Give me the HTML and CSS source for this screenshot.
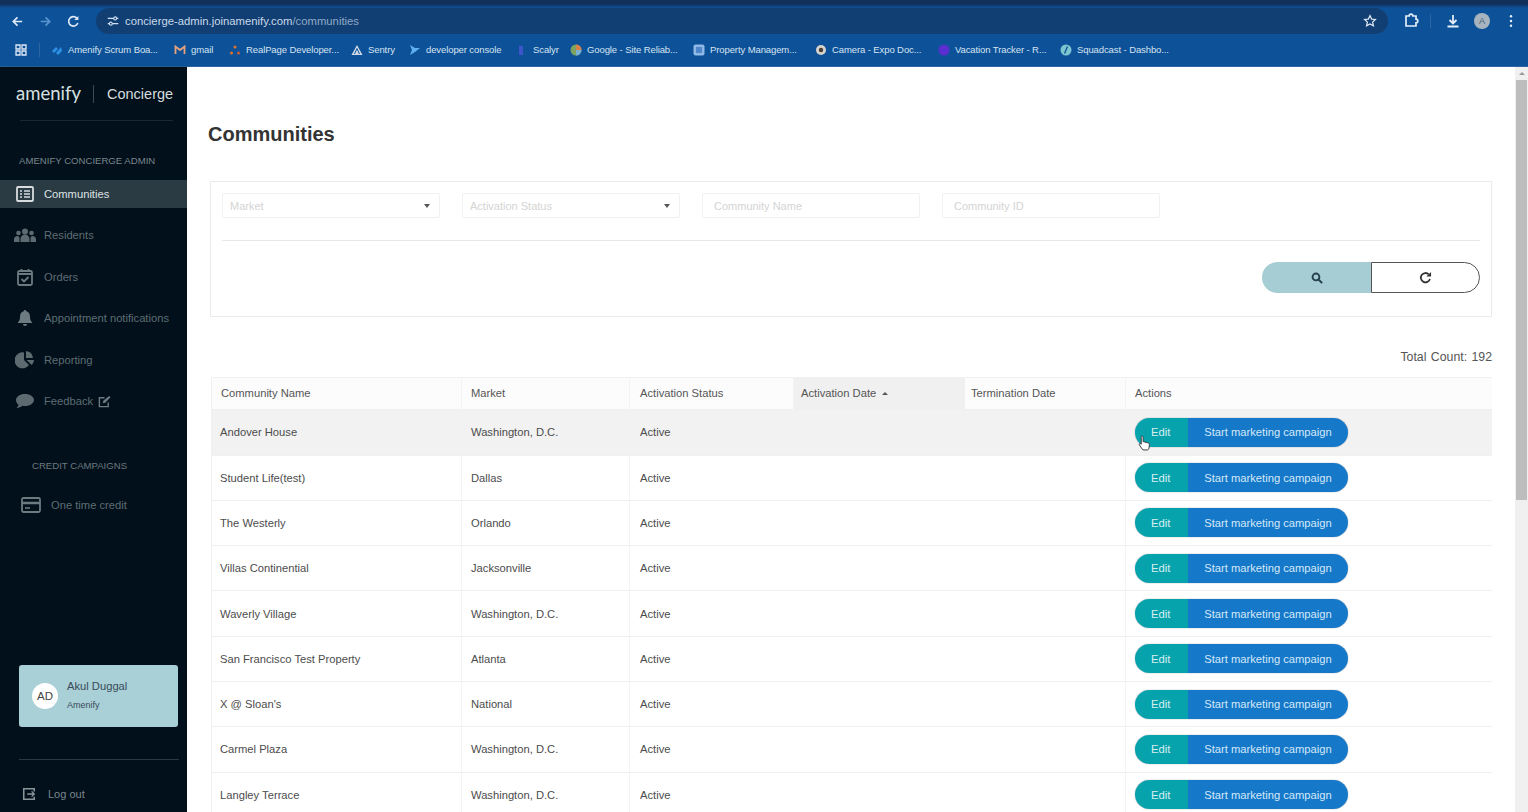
FILE: index.html
```html
<!DOCTYPE html>
<html lang="en">
<head>
<meta charset="utf-8">
<title>Communities</title>
<link rel="stylesheet" href="styles.css">
</head>
<body>
<div class="chrome">
  <div class="tabstrip"></div>
  <div class="toolbar">
    <div class="nav">
      <svg class="ic" viewBox="0 0 16 16"><path d="M13 8H4M8 3.500 3.500 8 8 12.500" fill="none" stroke="#dfe9f5" stroke-width="1.800"/></svg>
      <svg class="ic" viewBox="0 0 16 16"><path d="M3 8h9M8 3.500 12.500 8 8 12.500" fill="none" stroke="#5b93cf" stroke-width="1.800"/></svg>
      <svg class="ic" viewBox="0 0 16 16"><path d="M12.600 9.500A5 5 0 1 1 11.500 4.400" fill="none" stroke="#dfe9f5" stroke-width="1.800"/><path d="M13.200 2v4.400H8.800z" fill="#dfe9f5"/></svg>
    </div>
    <div class="omnibox">
      <span class="site"><svg viewBox="0 0 16 16" width="14" height="14"><path d="M2 5h7M12 5h2M2 11h2M7 11h7" stroke="#cfe0f2" stroke-width="1.600" fill="none"/><circle cx="10.500" cy="5" r="1.700" fill="none" stroke="#cfe0f2" stroke-width="1.300"/><circle cx="5.500" cy="11" r="1.700" fill="none" stroke="#cfe0f2" stroke-width="1.300"/></svg></span>
      <span class="url">concierge-admin.joinamenify.com<span class="path">/communities</span></span>
      <svg class="star" viewBox="0 0 16 16" width="14" height="14"><path d="M8 1.800l1.900 4 4.300.5-3.200 3 .9 4.300L8 11.400l-3.900 2.200.9-4.300-3.200-3 4.300-.5z" fill="none" stroke="#dfe9f5" stroke-width="1.400"/></svg>
    </div>
    <div class="tools">
      <svg class="ext" viewBox="0 0 16 16" width="16" height="16"><path d="M3 3h3.200a1.800 1.800 0 0 1 3.600 0H13v3.200a1.800 1.800 0 0 1 0 3.600V13H3z" fill="none" stroke="#e4edf7" stroke-width="1.700"/></svg>
      <span class="sep"></span>
      <svg class="dl" viewBox="0 0 16 16" width="16" height="16"><path d="M8 2v8M4.500 7 8 10.500 11.500 7M2.500 13.500h11" fill="none" stroke="#e4edf7" stroke-width="1.800"/></svg>
      <span class="avatar">A</span>
      <svg class="menu" viewBox="0 0 4 16" width="4" height="14"><circle cx="2" cy="2.500" r="1.400" fill="#e4edf7"/><circle cx="2" cy="8" r="1.400" fill="#e4edf7"/><circle cx="2" cy="13.500" r="1.400" fill="#e4edf7"/></svg>
    </div>
  </div>
  <div class="bookmarks">
    <svg class="apps" viewBox="0 0 12 12" width="12" height="12"><path d="M1 1h4v4H1zM7 1h4v4H7zM1 7h4v4H1zM7 7h4v4H7z" fill="none" stroke="#dfe9f5" stroke-width="1.300"/></svg>
    <span class="bsep"></span>
    <span class="bm bm1"><svg viewBox="0 0 12 12" width="12" height="12"><path d="M1 7l4-4 2 2-4 4zM5 9l5-6 1 4-4 4z" fill="#2d8fe6"/></svg>Amenify Scrum Boa...</span>
    <span class="bm bm2"><svg viewBox="0 0 12 12" width="12" height="12"><path d="M1.500 10V2.500L6 6l4.500-3.500V10" fill="none" stroke="#e9a27a" stroke-width="1.800"/></svg>gmail</span>
    <span class="bm bm3"><svg viewBox="0 0 12 12" width="12" height="12"><circle cx="6" cy="3" r="1.600" fill="#d9722f"/><circle cx="2.500" cy="9" r="1.600" fill="#d9722f"/><circle cx="9.500" cy="9" r="1.600" fill="#c85a3a"/></svg>RealPage Developer...</span>
    <span class="bm bm4"><svg viewBox="0 0 12 12" width="12" height="12"><path d="M6 1l5.500 10H.5z" fill="#cdd9e6"/><path d="M6 4.500 3.500 10M6 4.500 8.500 10" stroke="#0d5299"/></svg>Sentry</span>
    <span class="bm bm5"><svg viewBox="0 0 12 12" width="12" height="12"><path d="M1 1l5 3h5L6 8l-5 3 2-5z" fill="#5fb0ee"/></svg>developer console</span>
    <span class="bm bm6"><svg viewBox="0 0 12 12" width="12" height="12"><rect x="3" y="2" width="4" height="9" fill="#3d55c9"/></svg>Scalyr</span>
    <span class="bm bm7"><svg viewBox="0 0 12 12" width="12" height="12"><circle cx="6" cy="6" r="5.500" fill="#7fa35f"/><path d="M6 .5A5.500 5.500 0 0 1 11.500 6H6z" fill="#d97f4a"/><path d="M6 6h5.500A5.500 5.500 0 0 1 6 11.500z" fill="#7ab0d6"/></svg>Google - Site Reliab...</span>
    <span class="bm bm8"><svg viewBox="0 0 12 12" width="12" height="12"><rect x=".5" y=".5" width="11" height="11" rx="2" fill="#8fb8e6"/><rect x="3" y="3" width="6" height="6" fill="#4f86c9"/></svg>Property Managem...</span>
    <span class="bm bm9"><svg viewBox="0 0 12 12" width="12" height="12"><circle cx="6" cy="6" r="5" fill="#d6d3cc"/><circle cx="6" cy="6" r="2.200" fill="#4a3f35"/></svg>Camera - Expo Doc...</span>
    <span class="bm bm10"><svg viewBox="0 0 12 12" width="12" height="12"><circle cx="6" cy="6" r="5.500" fill="#5a2fd0"/></svg>Vacation Tracker - R...</span>
    <span class="bm bm11"><svg viewBox="0 0 12 12" width="12" height="12"><circle cx="6" cy="6" r="5.500" fill="#7cc6cf"/><path d="M7.500 2.500 4.500 9.500" stroke="#0d5299" stroke-width="1.300"/></svg>Squadcast - Dashbo...</span>
  </div>
</div>
<div class="app">
  <aside class="sidebar">
    <div class="brand"><span class="logo">amenify</span><span class="divider"></span><span class="product">Concierge</span></div>
    <div class="rule"></div>
    <div class="section">AMENIFY CONCIERGE ADMIN</div>
    <nav class="menu-list">
      <a class="item active"><svg viewBox="0 0 18 16" width="18" height="16"><rect x="1" y="1" width="16" height="14" rx="1" fill="none" stroke="#d8dcde" stroke-width="1.800"/><path d="M4 5h2M8 5h6M4 8h2M8 8h6M4 11h2M8 11h6" stroke="#d8dcde" stroke-width="1.500"/></svg>Communities</a>
      <a class="item"><svg viewBox="0 0 22 14" width="22" height="14"><circle cx="11" cy="3.500" r="3" fill="#5d6a70"/><circle cx="4.500" cy="5" r="2.300" fill="#5d6a70"/><circle cx="17.500" cy="5" r="2.300" fill="#5d6a70"/><path d="M6.500 14v-3a3.500 3.500 0 0 1 9 0v3zM0 14v-3a3 3 0 0 1 5.500-1.500V14zM22 14v-3a3 3 0 0 0-5.500-1.500V14z" fill="#5d6a70"/></svg>Residents</a>
      <a class="item"><svg viewBox="0 0 16 18" width="16" height="18"><rect x="1" y="3" width="14" height="14" rx="1.500" fill="none" stroke="#6d7a80" stroke-width="1.800"/><path d="M1 6h14" stroke="#6d7a80" stroke-width="2"/><path d="M4.500 1v3M11.500 1v3" stroke="#6d7a80" stroke-width="1.800"/><path d="M4.500 11l2.500 2.500 4.500-4.500" fill="none" stroke="#6d7a80" stroke-width="1.800"/></svg>Orders</a>
      <a class="item"><svg viewBox="0 0 16 18" width="16" height="18"><path d="M8 1a1.300 1.300 0 0 1 1.300 1.300C12 3 13 5 13 8c0 3 1 4.500 2.500 6H.5C2 12.500 3 11 3 8c0-3 1-5 3.700-5.700A1.300 1.300 0 0 1 8 1zM6 15h4a2 2 0 0 1-4 0z" fill="#6d7a80"/></svg>Appointment notifications</a>
      <a class="item"><svg viewBox="0 0 20 18" width="20" height="18"><path d="M9 1.500V9l5 5a8 8 0 1 1-5-12.500z" fill="#5d6a70"/><path d="M11 0a8 8 0 0 1 7 7h-7zM11.500 9H19a8 8 0 0 1-2.300 5z" fill="#5d6a70"/></svg>Reporting</a>
      <a class="item"><svg viewBox="0 0 20 16" width="20" height="16"><path d="M10 1c5 0 9 2.700 9 6s-4 6-9 6c-1 0-2-.1-2.800-.3C5.800 14 4 14.800 1.500 15c1-.9 1.800-2 2-3.300C2 10.600 1 8.900 1 7c0-3.300 4-6 9-6z" fill="#5d6a70"/></svg>Feedback<svg class="ext-link" viewBox="0 0 14 14" width="13" height="13"><path d="M11 8v4.500H1.500V3H7" fill="none" stroke="#6d7a80" stroke-width="1.500"/><path d="M5 9l1-3 6-5 1.500 1.500-6 6z" fill="#6d7a80"/></svg></a>
    </nav>
    <div class="section section-credit">CREDIT CAMPAIGNS</div>
    <a class="item item-credit"><svg viewBox="0 0 20 16" width="20" height="16"><rect x="1" y="1" width="18" height="14" rx="1.500" fill="none" stroke="#6d7a80" stroke-width="1.800"/><path d="M1 6h18" stroke="#6d7a80" stroke-width="2.500"/><path d="M4 11h5" stroke="#6d7a80" stroke-width="1.600"/></svg>One time credit</a>
    <div class="spacer"></div>
    <div class="user-card">
      <span class="initials">AD</span>
      <div class="user-text"><div class="user-name">Akul Duggal</div><div class="user-org">Amenify</div></div>
    </div>
    <div class="foot-rule"></div>
    <a class="logout"><svg viewBox="0 0 16 16" width="14" height="14"><path d="M14 5V2H2v12h12v-3" fill="none" stroke="#8a9599" stroke-width="1.800"/><path d="M6 8h8M11 5l3 3-3 3" fill="none" stroke="#8a9599" stroke-width="1.600"/></svg>Log out</a>
  </aside>
  <main class="main">
    <h1 class="title">Communities</h1>
    <section class="filters">
      <div class="filter-row">
        <div class="field select">Market<span class="caret"></span></div>
        <div class="field select">Activation Status<span class="caret"></span></div>
        <div class="field text">Community Name</div>
        <div class="field text">Community ID</div>
      </div>
      <div class="filter-rule"></div>
      <div class="filter-actions">
        <button class="btn-search" type="button"><svg viewBox="0 0 14 14" width="12" height="12"><circle cx="5.800" cy="5.800" r="4" fill="none" stroke="#24414d" stroke-width="2.200"/><path d="M8.800 8.800 13 13" stroke="#24414d" stroke-width="2.400"/></svg></button>
        <button class="btn-reset" type="button"><svg viewBox="0 0 14 14" width="13" height="13"><path d="M11.800 8.500A5 5 0 1 1 10.500 3.600" fill="none" stroke="#333" stroke-width="1.900"/><path d="M13 1v5H8z" fill="#333"/></svg></button>
      </div>
    </section>
    <div class="total">Total Count: 192</div>
    <div class="table">
      <div class="row head">
        <div class="cell">Community Name</div><div class="cell">Market</div><div class="cell">Activation Status</div><div class="cell sorted">Activation Date<span class="sort"></span></div><div class="cell">Termination Date</div><div class="cell">Actions</div>
      </div>
      <div class="row hover"><div class="cell">Andover House</div><div class="cell">Washington, D.C.</div><div class="cell">Active</div><div class="cell"></div><div class="cell"></div><div class="cell"><div class="acts"><span class="edit">Edit</span><span class="camp">Start marketing campaign</span></div></div></div>
      <div class="row"><div class="cell">Student Life(test)</div><div class="cell">Dallas</div><div class="cell">Active</div><div class="cell"></div><div class="cell"></div><div class="cell"><div class="acts"><span class="edit">Edit</span><span class="camp">Start marketing campaign</span></div></div></div>
      <div class="row"><div class="cell">The Westerly</div><div class="cell">Orlando</div><div class="cell">Active</div><div class="cell"></div><div class="cell"></div><div class="cell"><div class="acts"><span class="edit">Edit</span><span class="camp">Start marketing campaign</span></div></div></div>
      <div class="row"><div class="cell">Villas Continential</div><div class="cell">Jacksonville</div><div class="cell">Active</div><div class="cell"></div><div class="cell"></div><div class="cell"><div class="acts"><span class="edit">Edit</span><span class="camp">Start marketing campaign</span></div></div></div>
      <div class="row"><div class="cell">Waverly Village</div><div class="cell">Washington, D.C.</div><div class="cell">Active</div><div class="cell"></div><div class="cell"></div><div class="cell"><div class="acts"><span class="edit">Edit</span><span class="camp">Start marketing campaign</span></div></div></div>
      <div class="row"><div class="cell">San Francisco Test Property</div><div class="cell">Atlanta</div><div class="cell">Active</div><div class="cell"></div><div class="cell"></div><div class="cell"><div class="acts"><span class="edit">Edit</span><span class="camp">Start marketing campaign</span></div></div></div>
      <div class="row"><div class="cell">X @ Sloan's</div><div class="cell">National</div><div class="cell">Active</div><div class="cell"></div><div class="cell"></div><div class="cell"><div class="acts"><span class="edit">Edit</span><span class="camp">Start marketing campaign</span></div></div></div>
      <div class="row"><div class="cell">Carmel Plaza</div><div class="cell">Washington, D.C.</div><div class="cell">Active</div><div class="cell"></div><div class="cell"></div><div class="cell"><div class="acts"><span class="edit">Edit</span><span class="camp">Start marketing campaign</span></div></div></div>
      <div class="row"><div class="cell">Langley Terrace</div><div class="cell">Washington, D.C.</div><div class="cell">Active</div><div class="cell"></div><div class="cell"></div><div class="cell"><div class="acts"><span class="edit">Edit</span><span class="camp">Start marketing campaign</span></div></div></div>
    </div>
    <svg class="cursor" viewBox="0 0 14 18" width="13" height="18"><path d="M4 1.500c1 0 1.500.6 1.500 1.500v4.500l5 1.200c1.200.3 1.800 1 1.800 2.200l-.5 3.600c-.2 1.200-.8 2-2 2H6.500c-1 0-1.600-.4-2.200-1.200L1.500 11c-.6-.9.400-2 1.500-1.200l.5.500V3c0-1 0-1.500.5-1.500z" fill="#fff" stroke="#333" stroke-width="1"/></svg>
  </main>
  <div class="scrollbar"><span class="arrow"></span><div class="thumb"></div></div>
</div>
</body>
</html>
```
FILE: styles.css
```css
* { box-sizing: border-box; }
html, body { margin: 0; padding: 0; height: 812px; overflow: hidden; }
body { font-family: "Liberation Sans", Arial, sans-serif; background: #fff; color: #444; display: flex; flex-direction: column; }

.chrome { height: 67px; flex: none; background: #0d5299; color: #dfe9f5; border-bottom: 1px solid #2c659f; }
.tabstrip { height: 8px; background: linear-gradient(#12305a 0, #12305a 4px, #0d5299 8px); }
.toolbar { height: 26px; display: flex; align-items: center; }
.nav { width: 96px; display: flex; align-items: center; padding-left: 10px; gap: 13px; flex: none; }
.ic { width: 15px; height: 15px; }
.omnibox { width: 1292px; height: 26px; background: #123f73; border-radius: 13px; display: flex; align-items: center; padding: 0 11px 0 5px; flex: none; }
.site { width: 24px; display: flex; justify-content: center; }
.url { font-size: 11.300px; color: #c9d9ea; flex: 1; }
.path { color: #8fa9c6; }
.tools { display: flex; align-items: center; flex: 1; padding-left: 15px; }
.sep { width: 1px; height: 14px; background: #2c659f; margin: 0 14px 0 11px; }
.dl { margin-right: 13px; }
.avatar { width: 16px; height: 16px; border-radius: 50%; background: #a7b4bf; color: #44607a; font-size: 9px; text-align: center; line-height: 16px; margin-right: 19px; }

.bookmarks { height: 32px; display: flex; align-items: center; padding: 0 0 1px 15px; font-size: 9.500px; color: #d5e2f0; }
.apps { flex: none; }
.bsep { width: 1px; height: 14px; background: #2c659f; margin: 0 11px 0 12px; }
.bm { display: flex; align-items: center; gap: 5px; white-space: nowrap; letter-spacing: -.1px; }
.bm1 { width: 123px; }
.bm2 { width: 55px; }
.bm3 { width: 122px; }
.bm4 { width: 58px; }
.bm5 { width: 107px; }
.bm6 { width: 54px; }
.bm7 { width: 123px; }
.bm8 { width: 122px; }
.bm9 { width: 123px; }
.bm10 { width: 122px; }
.bm11 { width: 120px; }

.app { flex: 1; min-height: 0; display: flex; position: relative; }
.sidebar { width: 187px; flex: none; background: #01101b; display: flex; flex-direction: column; box-shadow: 1px 0 2px rgba(0,0,0,.25); }
.brand { display: flex; align-items: center; height: 30px; margin: 12px 0 0 16px; }
.logo { font-family: Lato, sans-serif; font-size: 18.500px; color: #d6e0e0; width: 77px; padding-bottom: 2px; }
.divider { width: 1px; height: 18px; background: #3c4a52; }
.product { font-size: 14.500px; color: #d6dcde; margin-left: 13px; }
.rule { height: 1px; margin: 11px 14px 0 20px; background: #1a2730; }
.section { font-size: 9.600px; color: #7b868b; margin: 34px 0 0 19px; line-height: 12px; }
.menu-list { display: flex; flex-direction: column; margin-top: 13px; }
.item { height: 41.500px; flex: none; display: flex; align-items: center; font-size: 11.200px; color: #5f6d73; position: relative; padding-left: 44px; }
.item > svg:first-child { position: absolute; left: 25px; top: 50%; transform: translate(-50%, -50%); }
.item.active { height: 28px; margin-bottom: 6.500px; background: #2b3b44; color: #dfe3e5; }
.ext-link { margin-left: 5px; }
.section-credit { margin: 38px 0 0 32px; color: #6d797e; }
.item-credit { margin-top: 16px; height: 34px; padding-left: 51px; }
.item-credit > svg:first-child { left: 31px; }
.spacer { flex: 1; }
.user-card { width: 159px; height: 62px; margin-left: 19px; background: #a8d0d6; border-radius: 3px; display: flex; align-items: center; padding-left: 13px; color: #3a4a5a; flex: none; }
.initials { width: 26px; height: 26px; border-radius: 50%; background: #fff; color: #444; font-size: 11.500px; display: flex; align-items: center; justify-content: center; flex: none; }
.user-text { margin-left: 9px; margin-top: -2px; }
.user-name { font-size: 11.200px; line-height: 14px; }
.user-org { font-size: 9px; margin-top: 7px; line-height: 11px; }
.foot-rule { height: 1px; background: #2a3840; margin: 32px 8px 0 19px; }
.logout { height: 35px; flex: none; display: flex; align-items: center; gap: 12px; padding-left: 22px; margin: 16px 0 1px; font-size: 11px; color: #7b868b; }

.main { flex: 1; min-width: 0; background: #fff; position: relative; padding: 0 36px 0 21px; }
.title { font-size: 20px; font-weight: 700; color: #333; margin: 0; padding: 56px 0 0 0; line-height: 23px; }
.filters { margin: 35px 0 0 2px; height: 136px; border: 1px solid #ebebeb; padding: 11px 11px 0 11px; }
.filter-row { display: flex; gap: 22px; }
.field { width: 218px; height: 25px; border: 1px solid #f1f1f1; border-radius: 2px; font-size: 11px; color: #d4d4d4; display: flex; align-items: center; position: relative; }
.select { padding-left: 7px; }
.text { padding-left: 11px; }
.caret { position: absolute; right: 9px; top: 10px; border: 3px solid transparent; border-top: 4px solid #555; border-bottom: 0; }
.filter-rule { height: 1px; background: #e8e8e8; margin-top: 22px; }
.filter-actions { display: flex; justify-content: flex-end; margin-top: 21px; }
.btn-search, .btn-reset { width: 109px; height: 31px; padding: 0; display: flex; align-items: center; justify-content: center; }
.btn-search { background: #a5cdd3; border: 0; border-radius: 16px 0 0 16px; }
.btn-reset { background: #fff; border: 1px solid #555; border-radius: 0 16px 16px 0; }
.total { text-align: right; font-size: 12.300px; color: #555; line-height: 14px; margin: 33px 0 0; word-spacing: 1px; }
.table { margin: 13px 0 0 3px; border-top: 1px solid #f0f0f0; border-left: 1px solid #f0f0f0; }
.row { display: grid; grid-template-columns: 250px 168px 164px 171px 161px 1fr; height: 45.300px; border-bottom: 1px solid #f0f0f0; font-size: 11.200px; color: #4c4c4c; }
.row.head { height: 31.500px; background: #fcfcfc; color: #555; }
.row.hover { height: 46px; background: #f2f2f2; }
.cell { display: flex; align-items: center; padding-left: 9px; border-right: 1px solid #f3f3f3; }
.cell:first-child { padding-left: 8px; }
.cell:nth-child(3) { padding-left: 10px; }
.row:not(.head) .cell:nth-child(3), .row:not(.head) .cell:nth-child(4) { border-right: 0; }
.head .cell:first-child { padding-left: 9px; }
.cell:last-child { border-right: 0; }
.head .sorted { background: #f0f0f0; padding-left: 7px; border-right: 0; }
.head .cell:nth-child(5) { padding-left: 6px; }
.sort { margin-left: 6px; border: 3px solid transparent; border-bottom: 3px solid #555; border-top: 0; }
.acts { display: flex; height: 29px; border-radius: 15px; overflow: hidden; color: #d8eef0; box-shadow: 0 0 1px #555; }
.edit { width: 53px; background: #06a3ad; display: flex; align-items: center; padding-left: 16px; }
.camp { width: 160px; background: #1578c9; display: flex; align-items: center; justify-content: center; color: #d6e8f7; }
.cursor { position: absolute; left: 951px; top: 367px; }

.scrollbar { position: absolute; right: 0; top: 0; bottom: 0; width: 13px; background: #f0f0f0; }
.arrow { position: absolute; left: 4px; top: 5px; border: 3px solid transparent; border-bottom: 3px solid #999; border-top: 0; }
.thumb { position: absolute; left: 1px; right: 1px; top: 13px; height: 420px; background: #bdbdbd; }
```
